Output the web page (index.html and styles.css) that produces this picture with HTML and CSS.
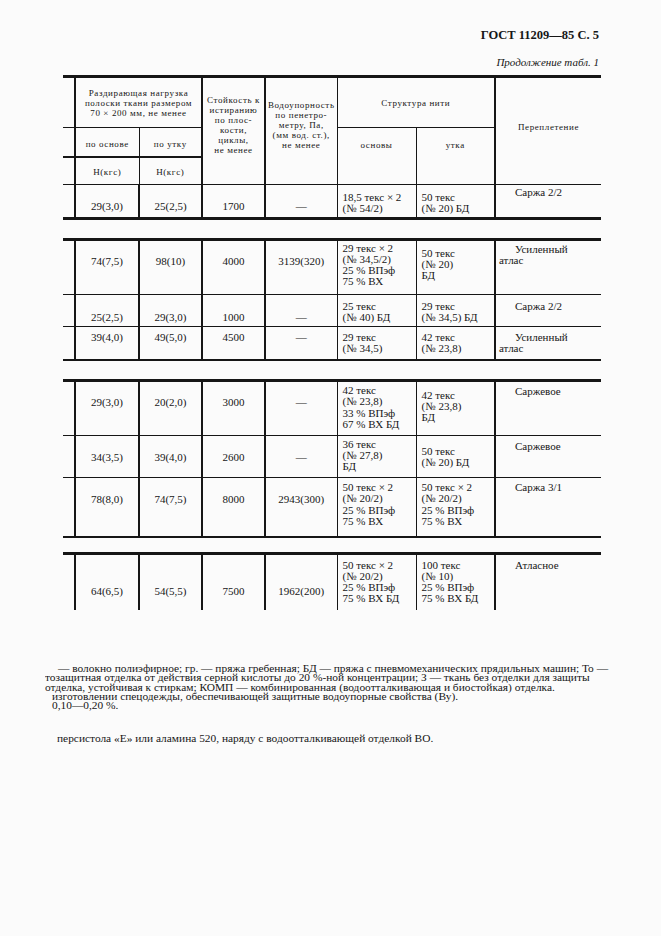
FILE: index.html
```html
<!DOCTYPE html>
<html lang="ru">
<head>
<meta charset="utf-8">
<title>ГОСТ 11209—85 С. 5</title>
<link rel="stylesheet" href="styles.css">
</head>
<body>
<div class="page">
  <div class="runhead">ГОСТ 11209—85 С. 5</div>
  <div class="cont">Продолжение табл. 1</div>

  <table class="t b1">
    <colgroup>
      <col class="w-stub"><col class="w1"><col class="w2"><col class="w3"><col class="w4"><col class="w5"><col class="w6"><col class="w7">
    </colgroup>
    <tr class="ha">
      <td class="stub bb1"></td>
      <td colspan="2" class="hd bl2 bb1">Раздирающая нагрузка<br>полоски ткани размером<br>70 × 200 мм, не менее</td>
      <td rowspan="3" class="hd bl2 bb1 lift">Стойкость к<br>истиранию<br>по плос-<br>кости,<br>циклы,<br>не менее</td>
      <td rowspan="3" class="hd bl2 bb1 lift">Водоупорность<br>по пенетро-<br>метру, Па,<br>(мм вод. ст.),<br>не менее</td>
      <td colspan="2" class="hd bl1 bb1">Структура нити</td>
      <td rowspan="3" class="hd bl2 bb1 lift2">Переплетение</td>
    </tr>
    <tr class="hb">
      <td class="stub bb2"></td>
      <td class="hd bl2 bb2 drop">по основе</td>
      <td class="hd bl1 bb2 drop">по утку</td>
      <td rowspan="2" class="hd bl1 bb1 lift3">основы</td>
      <td rowspan="2" class="hd bl1 bb1 lift3">утка</td>
    </tr>
    <tr class="hc">
      <td class="stub bb1"></td>
      <td class="hd bl2 bb1 drop2">Н(кгс)</td>
      <td class="hd bl1 bb1 drop2">Н(кгс)</td>
    </tr>
    <tr class="row r-b1 last3">
      <td></td>
      <td class="num pt16">29(3,0)</td>
      <td class="num pt16">25(2,5)</td>
      <td class="num pt16">1700</td>
      <td class="num pt16">—</td>
      <td class="txt pt7 lh-105">18,5 текс × 2<br>(№ 54/2)</td>
      <td class="txt pt7 lh-105">50 текс<br>(№ 20) БД</td>
      <td class="kind pt2">Саржа 2/2</td>
    </tr>
  </table>

  <table class="t">
    <colgroup>
      <col class="w-stub"><col class="w1"><col class="w2"><col class="w3"><col class="w4"><col class="w5"><col class="w6"><col class="w7">
    </colgroup>
    <tr class="row r54">
      <td></td>
      <td class="num pt15">74(7,5)</td>
      <td class="num pt15">98(10)</td>
      <td class="num pt15">4000</td>
      <td class="num pt15">3139(320)</td>
      <td class="txt pt2">29 текс × 2<br>(№ 34,5/2)<br>25 % ВПэф<br>75 % ВХ</td>
      <td class="txt pt7">50 текс<br>(№ 20)<br>БД</td>
      <td class="kind pt3">Усиленный<br>атлас</td>
    </tr>
    <tr class="row r32">
      <td></td>
      <td class="num pt17">25(2,5)</td>
      <td class="num pt17">29(3,0)</td>
      <td class="num pt17">1000</td>
      <td class="num pt17">—</td>
      <td class="txt pt6">25 текс<br>(№ 40) БД</td>
      <td class="txt pt6">29 текс<br>(№ 34,5) БД</td>
      <td class="kind pt6">Саржа 2/2</td>
    </tr>
    <tr class="row r32b last2">
      <td></td>
      <td class="num pt5">39(4,0)</td>
      <td class="num pt5">49(5,0)</td>
      <td class="num pt5">4500</td>
      <td class="num pt5">—</td>
      <td class="txt pt5">29 текс<br>(№ 34,5)</td>
      <td class="txt pt5">42 текс<br>(№ 23,8)</td>
      <td class="kind pt5">Усиленный<br>атлас</td>
    </tr>
  </table>

  <table class="t">
    <colgroup>
      <col class="w-stub"><col class="w1"><col class="w2"><col class="w3"><col class="w4"><col class="w5"><col class="w6"><col class="w7">
    </colgroup>
    <tr class="row r54">
      <td></td>
      <td class="num pt15">29(3,0)</td>
      <td class="num pt15">20(2,0)</td>
      <td class="num pt15">3000</td>
      <td class="num pt15">—</td>
      <td class="txt pt3 lh-115">42 текс<br>(№ 23,8)<br>33 % ВПэф<br>67 % ВХ БД</td>
      <td class="txt pt8">42 текс<br>(№ 23,8)<br>БД</td>
      <td class="kind pt4">Саржевое</td>
    </tr>
    <tr class="row r42">
      <td></td>
      <td class="num pt16">34(3,5)</td>
      <td class="num pt16">39(4,0)</td>
      <td class="num pt16">2600</td>
      <td class="num pt16">—</td>
      <td class="txt pt3">36 текс<br>(№ 27,8)<br>БД</td>
      <td class="txt pt10">50 текс<br>(№ 20) БД</td>
      <td class="kind pt5">Саржевое</td>
    </tr>
    <tr class="row r58 last2">
      <td></td>
      <td class="num pt16">78(8,0)</td>
      <td class="num pt16">74(7,5)</td>
      <td class="num pt16">8000</td>
      <td class="num pt16">2943(300)</td>
      <td class="txt pt4 lh-115">50 текс × 2<br>(№ 20/2)<br>25 % ВПэф<br>75 % ВХ</td>
      <td class="txt pt4 lh-115">50 текс × 2<br>(№ 20/2)<br>25 % ВПэф<br>75 % ВХ</td>
      <td class="kind pt4">Саржа 3/1</td>
    </tr>
  </table>

  <table class="t b4">
    <colgroup>
      <col class="w-stub"><col class="w1"><col class="w2"><col class="w3"><col class="w4"><col class="w5"><col class="w6"><col class="w7">
    </colgroup>
    <tr class="row r56 nob">
      <td></td>
      <td class="num pt31">64(6,5)</td>
      <td class="num pt31">54(5,5)</td>
      <td class="num pt31">7500</td>
      <td class="num pt31">1962(200)</td>
      <td class="txt pt5">50 текс × 2<br>(№ 20/2)<br>25 % ВПэф<br>75 % ВХ БД</td>
      <td class="txt pt5">100 текс<br>(№ 10)<br>25 % ВПэф<br>75 % ВХ БД</td>
      <td class="kind pt5">Атласное</td>
    </tr>
  </table>

  <div class="notes">
    <div class="fn in1">— волокно полиэфирное; гр. — пряжа гребенная; БД — пряжа с пневмомеханических прядильных машин; То —</div>
    <div class="fn">тозащитная отделка от действия серной кислоты до 20 %-ной концентрации; З — ткань без отделки для защиты</div>
    <div class="fn">отделка, устойчивая к стиркам; КОМП — комбинированная (водоотталкивающая и биостойкая) отделка.</div>
    <div class="fn in2">изготовлении спецодежды, обеспечивающей защитные водоупорные свойства (Ву).</div>
    <div class="fn in2">0,10—0,20 %.</div>
    <div class="fn in3 gap">персистола «Е» или аламина 520, наряду с водоотталкивающей отделкой ВО.</div>
  </div>
</div>
</body>
</html>
```

FILE: styles.css
```css
* { box-sizing: border-box; }

html, body {
  margin: 0;
  padding: 0;
  background: #fbfbfb;
}

body {
  font-family: "Liberation Serif", "Times New Roman", serif;
  color: #161616;
}

.page {
  width: 661px;
  height: 936px;
  padding-top: 27px;
}

.runhead {
  font-weight: bold;
  font-size: 12.5px;
  line-height: 16px;
  text-align: right;
  padding-right: 62px;
}

.cont {
  font-style: italic;
  font-size: 11px;
  line-height: 13px;
  text-align: right;
  padding-right: 62px;
  margin-top: 13px;
}

/* tables */
.t {
  border-collapse: collapse;
  table-layout: fixed;
  width: 538px;
  margin-left: 63px;
  margin-top: 18px;
  border-top: 3px solid #161616;
}

.b1 { margin-top: 6px; }
.b4 { margin-top: 14px; }

.w-stub { width: 12px; }
.w1 { width: 64px; }
.w2 { width: 63px; }
.w3 { width: 63px; }
.w4 { width: 72px; }
.w5 { width: 79px; }
.w6 { width: 79px; }
.w7 { width: 106px; }

.t td {
  padding: 0;
  font-size: 11px;
  line-height: 11px;
  white-space: nowrap;
  vertical-align: top;
}

/* header */
.ha { height: 51px; }
.hb { height: 29px; }
.hc { height: 28px; }

.t td.hd {
  font-size: 9px;
  line-height: 10px;
  letter-spacing: 0.6px;
  text-align: center;
  vertical-align: middle;
}

.t td.lift { padding-bottom: 12px; }
.t td.lift2 { padding-bottom: 8px; }
.t td.lift3 { padding-bottom: 22px; }
.t td.drop { padding-top: 5px; }
.t td.drop2 { padding-top: 3px; }

.bl1 { border-left: 1px solid #161616; }
.bl2 { border-left: 2px solid #161616; }
.bb1 { border-bottom: 1px solid #161616; }
.bb2 { border-bottom: 2px solid #161616; }

/* body rows */
.row td { border-bottom: 1px solid #161616; }
.row td:nth-child(2),
.row td:nth-child(3),
.row td:nth-child(4),
.row td:nth-child(5),
.row td:nth-child(8) { border-left: 2px solid #161616; }
.row td:nth-child(6),
.row td:nth-child(7) { border-left: 1px solid #161616; }

.row.last3 td { border-bottom: 3px solid #161616; }
.row.last2 td { border-bottom: 2px solid #161616; }
.row.nob td { border-bottom: 0; }

.r-b1 { height: 34px; }
.r54 { height: 55px; }
.r32 { height: 32px; }
.r32b { height: 33px; }
.r42 { height: 42px; }
.r58 { height: 60px; }
.r56 { height: 56px; }

.t td.lh-105 { line-height: 10.5px; }
.t td.lh-115 { line-height: 11.6px; }

.t td.num { text-align: center; }
.t td.txt { text-align: left; padding-left: 5px; }

.t td.pt2 { padding-top: 2px; }
.t td.pt3 { padding-top: 3px; }
.t td.pt4 { padding-top: 4px; }
.t td.pt5 { padding-top: 5px; }
.t td.pt6 { padding-top: 6px; }
.t td.pt7 { padding-top: 7px; }
.t td.pt8 { padding-top: 8px; }
.t td.pt10 { padding-top: 10px; }
.t td.pt15 { padding-top: 15px; }
.t td.pt16 { padding-top: 16px; }
.t td.pt17 { padding-top: 17px; }
.t td.pt31 { padding-top: 31px; }

.t td.kind {
  padding-left: 3px;
  text-indent: 16px;
}

/* notes: dense scanned lettering, glyphs a little squat */
.notes {
  margin-top: 55px;
  margin-left: 45px;
  font-size: 11.4px;
  line-height: 11.3px;
  transform: scaleY(0.82);
  transform-origin: 0 0;
}

.fn { white-space: nowrap; }
.fn.in1 { padding-left: 13px; }
.fn.in2 { padding-left: 7px; }
.fn.in3 { padding-left: 12px; }
.fn.gap { margin-top: 29px; }
```
